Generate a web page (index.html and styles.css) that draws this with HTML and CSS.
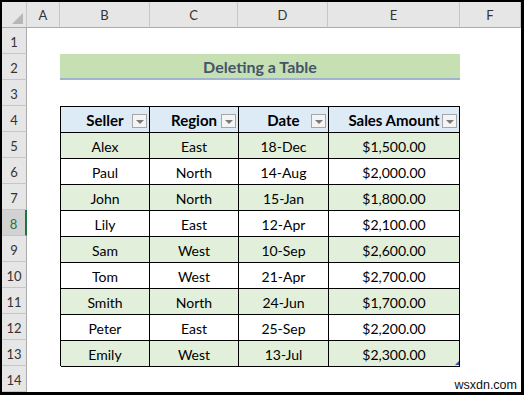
FILE: index.html
```html
<!DOCTYPE html>
<html>
<head>
<meta charset="utf-8">
<link rel="stylesheet" href="styles.css">
</head>
<body>
<div class="frame">
  <div class="sheet">
    <div class="corner"><span class="corner-tri"></span></div>
    <div class="colhdr">A</div>
    <div class="colhdr">B</div>
    <div class="colhdr">C</div>
    <div class="colhdr">D</div>
    <div class="colhdr">E</div>
    <div class="colhdr">F</div>

    <div class="rowhdr r1">1</div>
    <div class="rowhdr r2">2</div>
    <div class="rowhdr r3">3</div>
    <div class="rowhdr r4">4</div>
    <div class="rowhdr r5">5</div>
    <div class="rowhdr r6">6</div>
    <div class="rowhdr r7">7</div>
    <div class="rowhdr r8 active">8</div>
    <div class="rowhdr r9">9</div>
    <div class="rowhdr r10">10</div>
    <div class="rowhdr r11">11</div>
    <div class="rowhdr r12">12</div>
    <div class="rowhdr r13">13</div>
    <div class="rowhdr r14">14</div>

    <div class="title">Deleting a Table</div>

    <div class="tbl">
      <div class="th">Seller<span class="filter"></span></div>
      <div class="th">Region<span class="filter"></span></div>
      <div class="th">Date<span class="filter"></span></div>
      <div class="th">Sales Amount<span class="filter"></span></div>

      <div class="td g">Alex</div><div class="td g">East</div><div class="td g">18-Dec</div><div class="td g">$1,500.00</div>
      <div class="td">Paul</div><div class="td">North</div><div class="td">14-Aug</div><div class="td">$2,000.00</div>
      <div class="td g">John</div><div class="td g">North</div><div class="td g">15-Jan</div><div class="td g">$1,800.00</div>
      <div class="td">Lily</div><div class="td">East</div><div class="td">12-Apr</div><div class="td">$2,100.00</div>
      <div class="td g">Sam</div><div class="td g">West</div><div class="td g">10-Sep</div><div class="td g">$2,600.00</div>
      <div class="td">Tom</div><div class="td">West</div><div class="td">21-Apr</div><div class="td">$2,700.00</div>
      <div class="td g">Smith</div><div class="td g">North</div><div class="td g">24-Jun</div><div class="td g">$1,700.00</div>
      <div class="td">Peter</div><div class="td">East</div><div class="td">25-Sep</div><div class="td">$2,200.00</div>
      <div class="td g">Emily</div><div class="td g">West</div><div class="td g">13-Jul</div><div class="td g">$2,300.00</div>
      <span class="handle"></span>
    </div>
  </div>
  <div class="watermark">wsxdn.com</div>
</div>
</body>
</html>
```

FILE: styles.css
```css
* { box-sizing: border-box; }
html, body { margin: 0; padding: 0; background: #000; }
body { width: 524px; height: 395px; overflow: hidden; }

.frame {
  position: relative;
  width: 524px;
  height: 395px;
  border-top: 2px solid #000;
  border-left: 2px solid #000;
  border-right: 3px solid #000;
  border-bottom: 3px solid #000;
  background: #fff;
}

.sheet {
  display: grid;
  grid-template-columns: 25px 33px 90px 88px 90px 132px 61px;
  grid-template-rows: repeat(15, 26px);
  width: 519px;
  height: 390px;
  background: #fff;
  font-family: "Lato", "Open Sans", sans-serif;
}

.corner {
  position: relative;
  grid-column: 1;
  grid-row: 1;
  background: #e6e6e6;
  border-right: 1px solid #c6c6c6;
  border-bottom: 1px solid #ababab;
}
.corner-tri {
  position: absolute;
  right: 3px;
  bottom: 3px;
  width: 0;
  height: 0;
  border-left: 11px solid transparent;
  border-bottom: 11px solid #b7b7b7;
}

.colhdr {
  grid-row: 1;
  background: #e6e6e6;
  border-right: 1px solid #c6c6c6;
  border-bottom: 1px solid #ababab;
  display: flex;
  align-items: center;
  justify-content: center;
  font-size: 13px;
  color: #333;
  padding-top: 1px;
}

.rowhdr {
  grid-column: 1;
  background: #e6e6e6;
  border-right: 1px solid #ababab;
  border-bottom: 1px solid #c6c6c6;
  display: flex;
  align-items: center;
  justify-content: center;
  font-size: 13px;
  color: #333;
  padding-top: 3px;
}
.rowhdr.active {
  background: #d2d2d2;
  color: #217346;
  border-right: 2px solid #217346;
}
.r1 { grid-row: 2; } .r2 { grid-row: 3; } .r3 { grid-row: 4; } .r4 { grid-row: 5; }
.r5 { grid-row: 6; } .r6 { grid-row: 7; } .r7 { grid-row: 8; } .r8 { grid-row: 9; }
.r9 { grid-row: 10; } .r10 { grid-row: 11; } .r11 { grid-row: 12; } .r12 { grid-row: 13; }
.r13 { grid-row: 14; } .r14 { grid-row: 15; }

.title {
  grid-column: 3 / 7;
  grid-row: 3;
  background: #c6e0b4;
  border-bottom: 2px solid #9fb4cf;
  display: flex;
  align-items: center;
  justify-content: center;
  font-size: 16px;
  font-weight: 700;
  color: #44546a;
  padding-top: 1px;
}

.tbl {
  position: relative;
  grid-column: 3 / 7;
  grid-row: 5 / 15;
  display: grid;
  grid-template-columns: 89px 89px 90px 131px;
  grid-auto-rows: 26px;
  border-top: 1px solid #000;
  border-left: 1px solid #000;
  font-size: 14px;
  color: #000;
}

.th, .td {
  position: relative;
  border-right: 1px solid #000;
  border-bottom: 1px solid #000;
  display: flex;
  align-items: center;
  justify-content: center;
  padding-top: 1px;
}
.th {
  background: #ddebf7;
  font-weight: 700;
  font-size: 15px;
}
.td { background: #fff; }
.td.g { background: #e2efda; }

.filter {
  position: absolute;
  right: 2px;
  top: 7px;
  width: 15px;
  height: 14px;
  background: #f4f4f4;
  border: 1px solid #a6a6a6;
}
.filter::after {
  content: "";
  position: absolute;
  left: 3px;
  top: 5px;
  width: 0;
  height: 0;
  border-left: 4px solid transparent;
  border-right: 4px solid transparent;
  border-top: 4px solid #7a7a7a;
}

.handle {
  position: absolute;
  right: 1px;
  bottom: 1px;
  width: 0;
  height: 0;
  border-left: 4px solid transparent;
  border-bottom: 4px solid #3b4ea0;
}

.watermark {
  position: absolute;
  right: 4px;
  bottom: 0px;
  font-family: "Liberation Sans", Arial, sans-serif;
  font-size: 12.5px;
  color: #111;
  line-height: 14px;
}
```
